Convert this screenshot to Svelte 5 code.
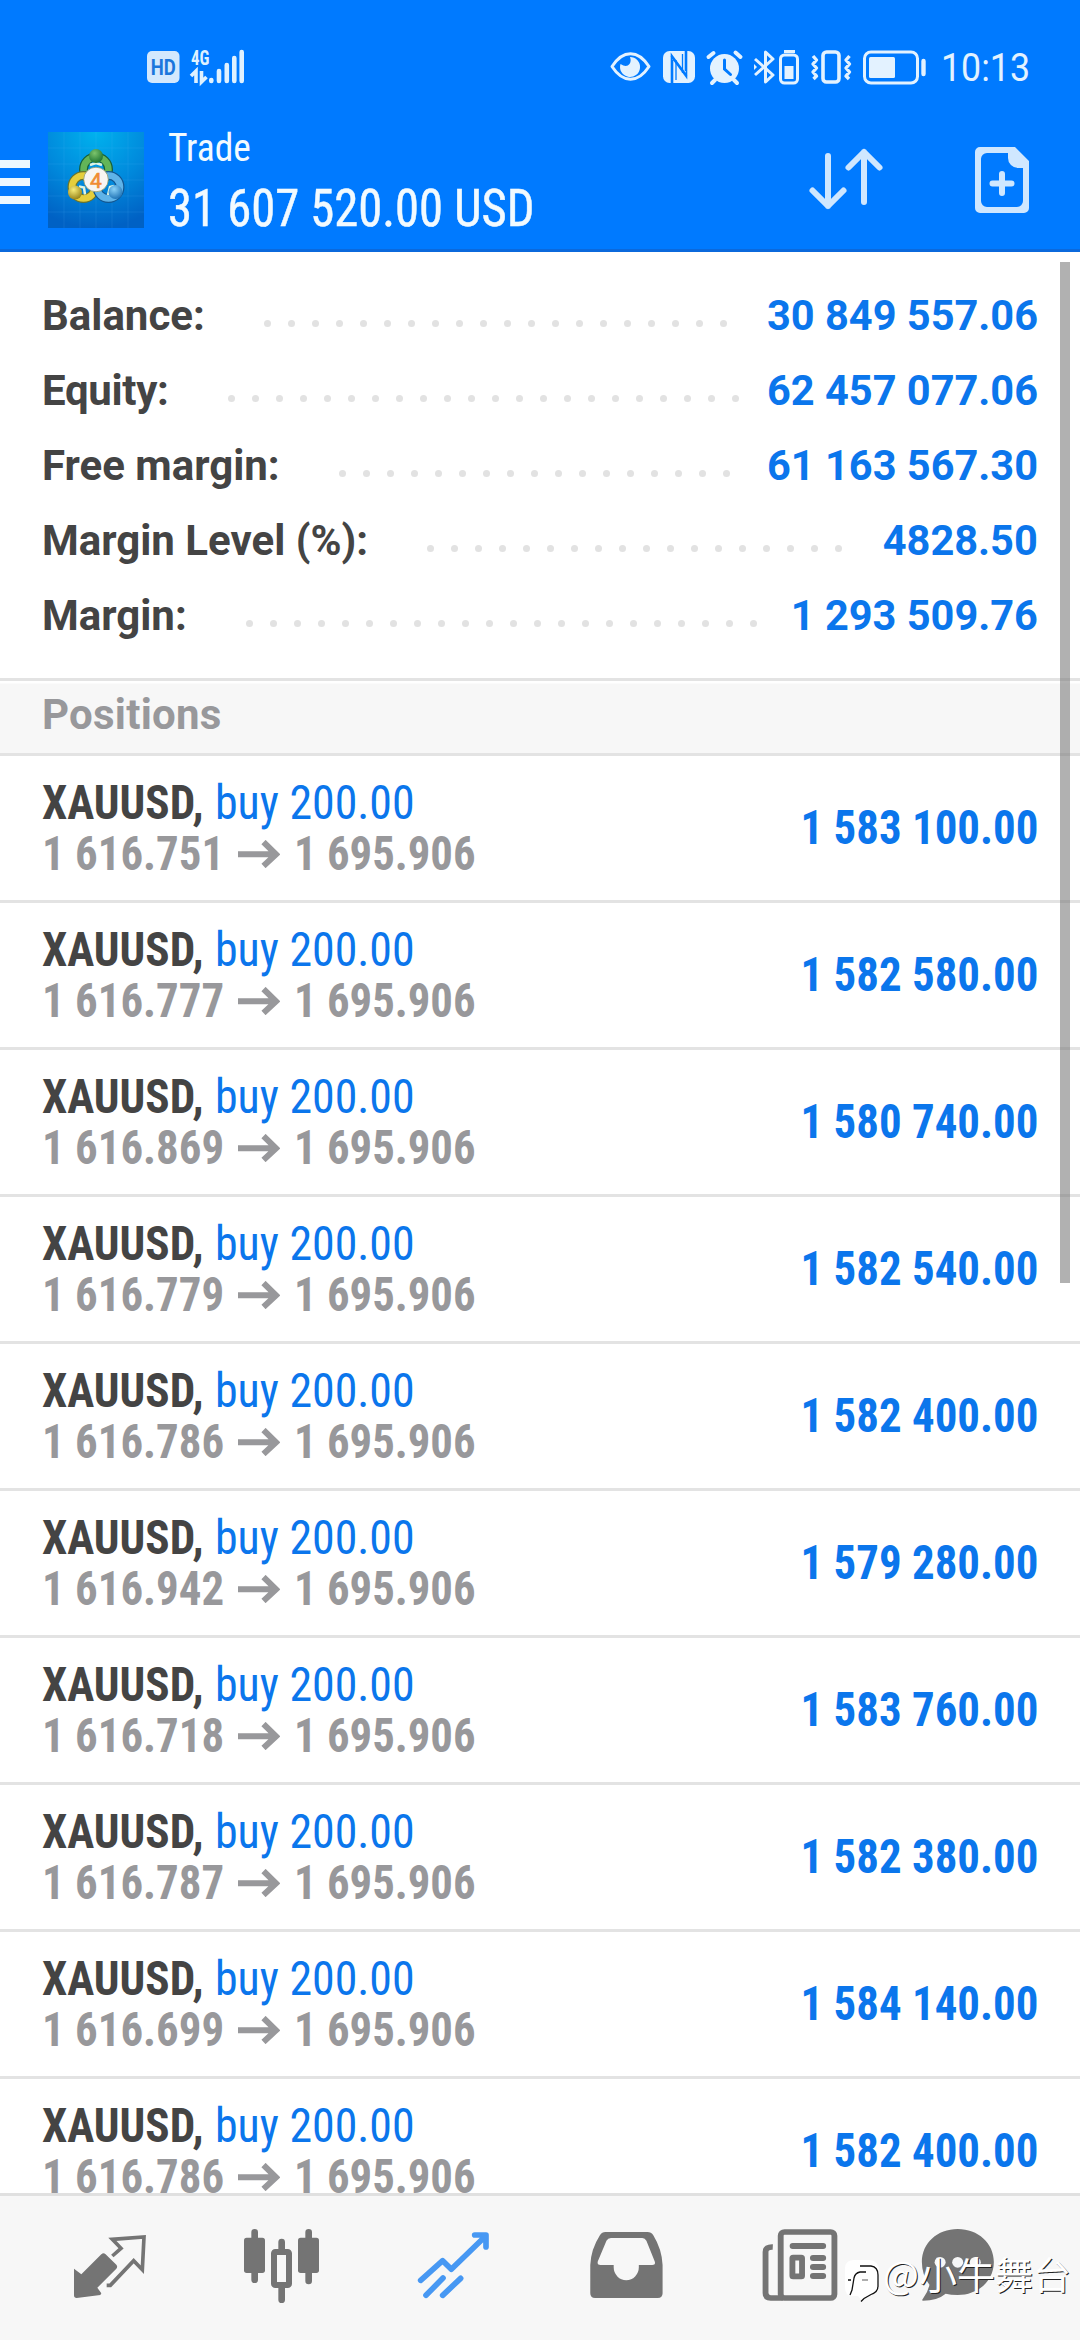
<script>
  const summary = [
    { label: 'Balance:', value: '30 849 557.06', dots: 20 },
    { label: 'Equity:', value: '62 457 077.06', dots: 22 },
    { label: 'Free margin:', value: '61 163 567.30', dots: 17 },
    { label: 'Margin Level (%):', value: '4828.50', dots: 18 },
    { label: 'Margin:', value: '1 293 509.76', dots: 22 }
  ];

  const positions = [
    ['1 616.751', '1 583 100.00'],
    ['1 616.777', '1 582 580.00'],
    ['1 616.869', '1 580 740.00'],
    ['1 616.779', '1 582 540.00'],
    ['1 616.786', '1 582 400.00'],
    ['1 616.942', '1 579 280.00'],
    ['1 616.718', '1 583 760.00'],
    ['1 616.787', '1 582 380.00'],
    ['1 616.699', '1 584 140.00'],
    ['1 616.786', '1 582 400.00']
  ].map(([open, profit]) => ({ open, profit }));
</script>

<div class="screen">
  <header>
    <div class="status">
      <svg class="network" width="104" height="40" viewBox="0 0 104 40">
        <rect x="3" y="4" width="32.5" height="32" rx="5" fill="#d3e8fd" />
        <text x="19.3" y="27.5" class="hd" text-anchor="middle" textLength="25" lengthAdjust="spacingAndGlyphs">HD</text>
        <text x="47" y="17.5" class="gen" textLength="18.5" lengthAdjust="spacingAndGlyphs">4G</text>
        <path d="M47 29l5-5v12M57.500 24v11l5-5" fill="none" stroke="#dff1ff" stroke-width="3.600" />
        <path d="M67.300 33v1M75 24v10M82.800 18v16M90.300 11v23M97.700 5v29" stroke="#dff1ff" stroke-width="4.600" stroke-linecap="round" />
      </svg>
      <div class="indicators">
        <svg width="320" height="40" viewBox="0 0 320 40" fill="none" stroke="#e3f2ff">
          <path d="M2 19.500C13 2.500 28 2.500 39 19.500C28 36.500 13 36.500 2 19.500Z" stroke-width="3" stroke-linejoin="round" />
          <path d="M20 10a10 10 0 1 1-9.500 7q6 4 9 0q2-3 .5-7z" fill="#e3f2ff" stroke="none" />
          <rect x="53" y="4" width="32" height="32" rx="6.500" fill="#e3f2ff" stroke="none" />
          <path d="M61.500 36V8l15.500 21M62.500 13v23M76.500 4v26L61 9M75.500 4v20" stroke="#007aff" stroke-width="1.600" />
          <path d="M66 13v20M72.500 7v19" stroke="#007aff" stroke-width="1.300" />
          <circle cx="114.500" cy="21.500" r="14.500" fill="#e3f2ff" stroke="none" />
          <path d="M98.500 10l5-4M125.500 5.500l5 4.500M105 33l-3 3M124 33l3 3" stroke-width="4" stroke-linecap="round" />
          <path d="M114.500 13v9l6 5.500" stroke="#007aff" stroke-width="3" stroke-linecap="round" />
          <path d="M145 12l18 16l-7.500 7V5l7.500 7l-18 16" stroke-width="3" stroke-linejoin="round" />
          <path d="M144 17v6l3-3z" fill="#e3f2ff" stroke="none" />
          <rect x="170.500" y="8" width="17" height="28" rx="4" stroke-width="3" />
          <path d="M174 4.500h11" stroke-width="3" />
          <rect x="174.500" y="19" width="9" height="13" fill="#e3f2ff" stroke="none" />
          <rect x="213" y="5" width="16" height="30" rx="3.500" stroke-width="3.600" />
          <path d="M203 9l3.500 4l-3.500 4l3.500 4l-3.500 4l3.500 4l-3 3M239.500 9l-3.500 4l3.500 4l-3.500 4l3.500 4l-3.500 4l3 3" stroke-width="3.400" stroke-linejoin="round" />
          <rect x="254.500" y="5" width="53" height="31" rx="6.500" stroke-width="3" />
          <rect x="259" y="10" width="26" height="21" rx="1.500" fill="#e3f2ff" stroke="none" />
          <path d="M313.500 14v13" stroke-width="4.400" stroke-linecap="round" />
        </svg>
        <span class="clock">10:13</span>
      </div>
    </div>

    <div class="toolbar">
      <div class="menu"><i></i><i></i><i></i></div>
      <svg class="logo" width="96" height="96" viewBox="0 0 96 96">
        <defs>
          <radialGradient id="sky" cx=".5" cy="0" r="1">
            <stop offset="0" stop-color="#00b2ee" /><stop offset=".55" stop-color="#0089dc" /><stop offset="1" stop-color="#0061c4" />
          </radialGradient>
          <radialGradient id="green" cx=".4" cy=".3" r=".8"><stop offset="0" stop-color="#7cc46c" /><stop offset="1" stop-color="#126a2a" /></radialGradient>
          <radialGradient id="gold" cx=".4" cy=".3" r=".8"><stop offset="0" stop-color="#f8ed7a" /><stop offset="1" stop-color="#8a760e" /></radialGradient>
          <radialGradient id="blue" cx=".4" cy=".3" r=".8"><stop offset="0" stop-color="#8bd2f8" /><stop offset="1" stop-color="#1268ae" /></radialGradient>
        </defs>
        <rect width="96" height="96" fill="url(#sky)" />
        <path d="M0 16H96M0 32H96M0 48H96M0 64H96M0 80H96M16 0V96M32 0V96M48 0V96M64 0V96M80 0V96" stroke="#5cc4f4" stroke-opacity=".13" />
        <g fill="none">
          <circle cx="48" cy="37.500" r="12.500" stroke="#176038" stroke-width="9" />
          <circle cx="48" cy="37.500" r="12.500" stroke="#63b558" stroke-width="6.500" />
          <circle cx="35.500" cy="55" r="11.500" stroke="#6b742c" stroke-width="9" />
          <circle cx="35.500" cy="55" r="11.500" stroke="#e5ce3c" stroke-width="6.500" />
          <circle cx="60.500" cy="55" r="11.500" stroke="#135791" stroke-width="9" />
          <circle cx="60.500" cy="55" r="11.500" stroke="#5fb3e8" stroke-width="6.500" />
          <path d="M42 33l6-2l6 2M31 54.500l5 1l1 7M60 63l2-8l4-1" stroke="#dff4e0" stroke-width="2.500" />
        </g>
        <circle cx="48" cy="24" r="7" fill="url(#green)" />
        <circle cx="27" cy="60.500" r="7" fill="url(#gold)" />
        <circle cx="67.500" cy="60" r="7" fill="url(#blue)" />
        <circle cx="48" cy="47.500" r="12.300" fill="#f7f5f3" stroke="#8e9a6e" stroke-width=".8" />
        <text x="48" y="55.500" class="four" text-anchor="middle">4</text>
      </svg>
      <div class="title">
        <span class="name">Trade</span>
        <span class="total">31 607 520.00 USD</span>
      </div>
      <svg class="sort" width="78" height="66" viewBox="0 0 78 66" fill="none" stroke="#cfe7ff" stroke-width="6" stroke-linecap="round" stroke-linejoin="round">
        <path d="M20 10V60M4.500 44.500L20 60L35.500 44.500M56 56V6M40.500 21.500L56 6L71.500 21.500" />
      </svg>
      <svg class="new" width="54" height="66" viewBox="0 0 54 66">
        <path d="M5 0H40L54 14V61a5 5 0 0 1-5 5H5a5 5 0 0 1-5-5V5a5 5 0 0 1 5-5ZM12 6a6 6 0 0 0-6 6V54a6 6 0 0 0 6 6H42a6 6 0 0 0 6-6V21H43a10 10 0 0 1-10-10V6Z" fill="#cfe7ff" fill-rule="evenodd" />
        <path d="M27 27v19M17.500 36.500h19" stroke="#cfe7ff" stroke-width="6" stroke-linecap="round" />
      </svg>
    </div>
  </header>

  <main>
    <section class="summary">
      {#each summary as row}
        <div class="line">
          <span class="label">{row.label}</span>
          <span class="dots">{#each Array(row.dots) as _}<i></i>{/each}</span>
          <span class="amount">{row.value}</span>
        </div>
      {/each}
    </section>

    <h2>Positions</h2>

    {#each positions as p}
      <article>
        <div class="deal">
          <div class="order"><b>XAUUSD,</b><span>buy 200.00</span></div>
          <div class="prices">
            <span class="open">{p.open}</span>
            <svg width="42" height="28" viewBox="0 0 42 28" fill="none" stroke="#98989b" stroke-width="6">
              <path d="M0 14.300H38M25.500 2L38 14.300L25.500 26" />
            </svg>
            <span class="current">1 695.906</span>
          </div>
        </div>
        <span class="profit">{p.profit}</span>
      </article>
    {/each}
    <div class="scrollbar"></div>
  </main>

  <nav>
    <svg viewBox="-48 108 516 432" preserveAspectRatio="none">
      <path d="M102 326L124 343L184 283Q190 277 196 282L229 314Q234 320 229 326L172 383L184 400L181 405L110 414Q102 414 102 406Z" fill="#747474" />
      <path d="M217 288L243 265L217 238L312 231L307 329L281 302L211 376H200" fill="none" stroke="#747474" stroke-width="11" />
    </svg>
    <svg viewBox="468 108 516 432" preserveAspectRatio="none">
      <path d="M644 217V359M806 217V363M725 246V270M725 382V419" stroke="#747474" stroke-width="20" stroke-linecap="round" />
      <rect x="612" y="233" width="63" height="106" rx="8" fill="#747474" />
      <rect x="774" y="233" width="63" height="106" rx="8" fill="#747474" />
      <rect x="702" y="276" width="45" height="99" rx="4" fill="#f7f7f7" stroke="#747474" stroke-width="18" />
    </svg>
    <svg viewBox="984 108 516 432" preserveAspectRatio="none">
      <path d="M1142 361L1208 302L1234 328L1337 228M1304 225H1338V261M1158 406L1209 354M1208 406L1262 355" fill="none" stroke="#4798f3" stroke-width="17" stroke-linecap="round" stroke-linejoin="round" />
    </svg>
    <svg viewBox="0 108 499.500 432" preserveAspectRatio="none">
      <path d="M190 216H312Q323 216 329 226Q354 268 356 315V400Q356 414 342 414H160Q146 414 146 400V315Q148 268 174 226Q180 216 190 216ZM206 234Q197 234 193 242L168 304Q165 315 176 315H214V322A36 38 0 0 0 287 322V315H326Q337 315 333 304L309 242Q305 234 297 234Z" fill="#747474" fill-rule="evenodd" />
    </svg>
    <svg viewBox="499.500 108 499.500 432" preserveAspectRatio="none">
      <rect x="699" y="216" width="156" height="198" rx="11" fill="none" stroke="#747474" stroke-width="17" />
      <path d="M676 261Q655 260 655 276V399Q655 414 670 414H705" fill="none" stroke="#747474" stroke-width="17" />
      <path d="M734 258H822M793 294H822M793 321H822M793 348H822" stroke="#747474" stroke-width="18" stroke-linecap="round" />
      <rect x="733" y="293" width="28" height="56" rx="2" fill="none" stroke="#747474" stroke-width="17" />
    </svg>
    <svg viewBox="999 108 499.500 432" preserveAspectRatio="none">
      <path d="M1213 207C1272 207 1318 249 1318 306C1318 363 1272 405 1213 405Q1193 405 1178 401Q1154 422 1112 422Q1108 421 1112 416Q1127 396 1131 374Q1109 345 1109 306C1109 249 1154 207 1213 207Z" fill="#747474" />
      <g fill="#f7f7f7"><circle cx="1162" cy="307" r="16" /><circle cx="1213" cy="307" r="16" /><circle cx="1264" cy="307" r="16" /></g>
    </svg>
  </nav>

  <div class="watermark">
    <svg width="40" height="48" viewBox="0 0 40 48">
      <path d="M3 9Q4 2 12 2H28Q37 3 37 13V28Q36 35 28 38L20 43L16 38H10Q3 38 3 29Z" fill="#fff" />
      <path d="M18 8H29Q36 9 36 17V28Q36 34 29 36.500L22 40.500L19 43.500M24 14H18Q13 15 12 20L10 32L8 37M6 22h3" fill="none" stroke="#111" stroke-width="1.300" />
      <path d="M20 22h6" stroke="#777" stroke-width="1.200" />
    </svg>
    <span>@小牛舞台</span>
  </div>
</div>

<style>
  :global(body) { margin: 0; background: #fff; }
  .screen {
    position: relative;
    display: flex;
    flex-direction: column;
    width: 1080px;
    height: 2340px;
    overflow: hidden;
    background: #fff;
    font-family: 'Roboto Condensed', Roboto, sans-serif;
  }
  svg { display: block; flex: none; }
  header {
    flex: none;
    box-sizing: border-box;
    height: 252px;
    background: #007aff;
    border-bottom: 3px solid #0b69dc;
  }
  .status { display: flex; justify-content: space-between; height: 109px; padding: 47px 50px 0 144px; box-sizing: border-box; }
  .indicators { display: flex; gap: 11px; }
  .clock { width: 89px; font: 38px/42px Roboto, sans-serif; color: #e3f2ff; white-space: nowrap; transform: scaleX(.94); transform-origin: left; }
  .hd { font: bold 22px Roboto, sans-serif; fill: #1b76dc; }
  .gen { font: bold 20px 'Roboto Condensed', sans-serif; fill: #dff1ff; }
  .four { font: 21px Roboto, sans-serif; fill: #f08c33; stroke: #f08c33; stroke-width: .6px; }
  .toolbar { display: flex; align-items: flex-start; height: 140px; }
  .menu { display: flex; flex-direction: column; gap: 10px; width: 30px; margin: 51px 18px 0 0; }
  .menu i { height: 8px; background: #ecf8ff; }
  .logo { margin-top: 23px; }
  .title { display: flex; flex-direction: column; align-items: flex-start; flex: 1; margin: 15px 0 0 24px; gap: 7px; color: #f2faff; white-space: nowrap; }
  .name, .total, .order b, .order span, .open, .current { transform-origin: left; }
  .name { font-size: 39px; line-height: 48px; transform: scaleX(.96); }
  .total { font-size: 51px; line-height: 60px; transform: scaleX(.953); -webkit-text-stroke: .5px #f2faff; }
  .sort { margin: 37px 89px 0 0; }
  .new { margin: 38px 51px 0 0; }

  main { position: relative; flex: 1; min-height: 0; overflow: hidden; }
  .summary { padding: 26px 42px 25px 42px; }
  .line { display: flex; align-items: center; justify-content: space-between; height: 75px; font: bold 42px/75px Roboto, sans-serif; white-space: nowrap; }
  .label { color: #444; }
  .line:nth-child(2) .label { letter-spacing: -.3px; }
  .dots { display: flex; flex: 1; gap: 17px; padding: 15px 0 0 59px; }
  .dots i { flex: none; width: 7px; height: 7px; border-radius: 50%; background: #e2e2e2; }
  .amount { color: #0b76ec; transform: scaleX(.989); transform-origin: right; }
  h2 {
    box-sizing: border-box;
    height: 78px;
    margin: 0;
    padding: 0 42px 4px;
    border: solid #e3e3e3;
    border-width: 3px 0;
    background: linear-gradient(#fff 2px, #f7f7f7 3px);
    font: bold 42px/68px Roboto, sans-serif;
    letter-spacing: .25px;
    color: #98989b;
  }
  article { display: flex; justify-content: space-between; align-items: center; box-sizing: border-box; height: 147px; padding: 0 42px; border-bottom: 3px solid #e3e3e3; font-size: 48px; line-height: 51px; white-space: nowrap; }
  .order { display: flex; color: #444; }
  .order b { width: 172.5px; transform: scaleX(.94); }
  .order span { color: #0b76ec; transform: scaleX(.955); }
  .prices { display: flex; align-items: center; color: #98989b; font-weight: bold; }
  .open { width: 196px; transform: scaleX(.935); }
  .current { transform: scaleX(.932); }
  .prices svg { margin-right: 14px; }
  .profit { margin-bottom: 2px; color: #0b76ec; font-weight: bold; transform: scaleX(.935); transform-origin: right; }
  .scrollbar { position: absolute; right: 10px; top: 10px; width: 10px; height: 1021px; background: rgba(120, 120, 120, .58); }

  nav { flex: none; display: flex; box-sizing: border-box; height: 147px; padding: 0 24px; border-top: 3px solid #e0e0e0; background: #f7f7f7; }
  nav svg { width: 172px; height: 144px; }
  .watermark { position: absolute; left: 842px; top: 2258px; display: flex; align-items: flex-start; color: #fff; font: 38px/40px 'Noto Sans CJK SC', sans-serif; white-space: nowrap; }
  .watermark span { margin: -5px 0 0 1px; text-shadow: 1px 1px 0 #222; }
</style>
